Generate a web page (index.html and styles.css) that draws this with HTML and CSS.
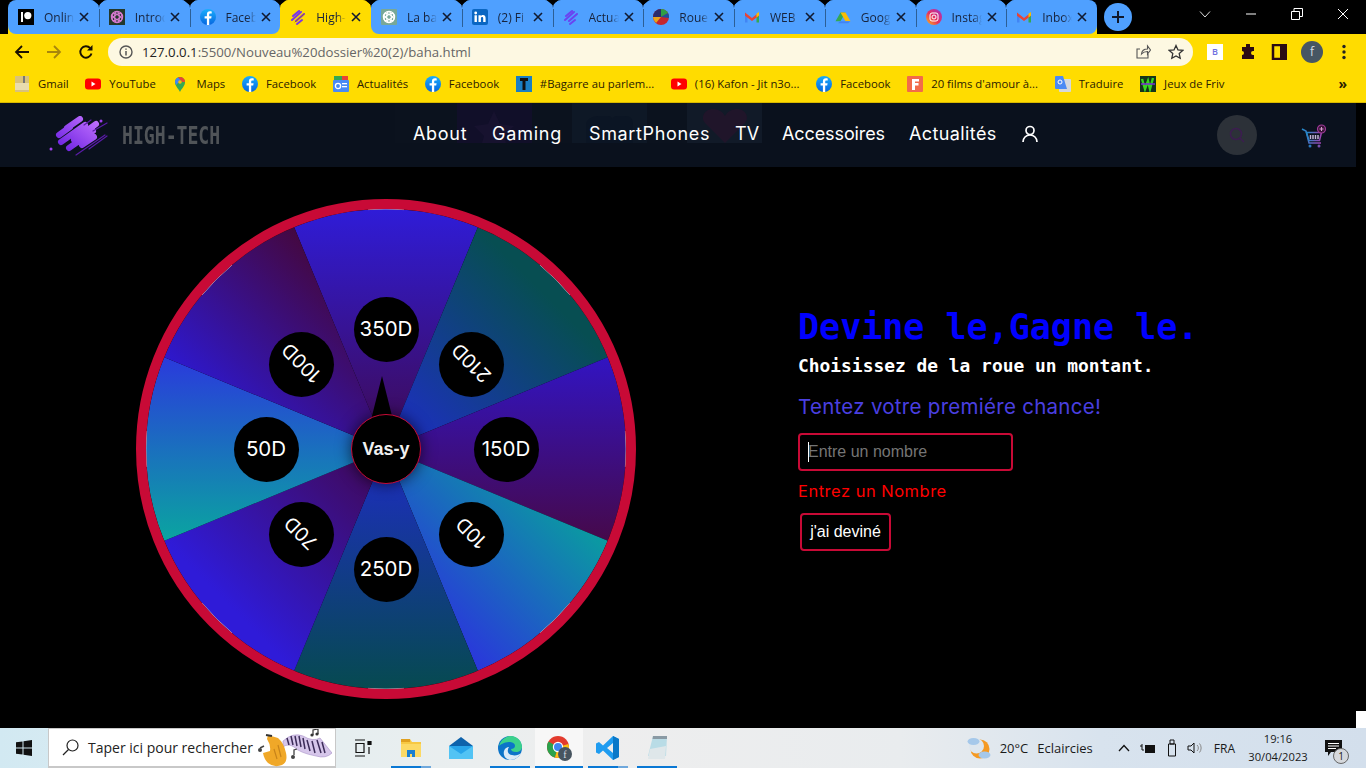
FILE: index.html
```html
<!DOCTYPE html>
<html lang="fr">
<head>
<meta charset="utf-8">
<title>High-Tech</title>
<link rel="stylesheet" href="styles.css">
</head>
<body>
<svg class="defs" width="0" height="0" aria-hidden="true">
  <defs>
    <linearGradient id="i-g" x1="0" y1="1" x2="1" y2="0"><stop offset="0" stop-color="#fdc11c"/><stop offset=".45" stop-color="#e8315b"/><stop offset="1" stop-color="#a12fc9"/></linearGradient>
    <linearGradient id="fb-g" x1="0" y1="0" x2="0" y2="1"><stop offset="0" stop-color="#1aaefc"/><stop offset="1" stop-color="#0666e0"/></linearGradient>
    <symbol id="fb" viewBox="0 0 16 16"><circle cx="8" cy="8" r="8" fill="url(#fb-g)"/><path d="M9.2 16V9.6h2l.4-2.4H9.2V5.8c0-.8.3-1.2 1.2-1.2h1.3V2.5c-.5-.1-1.1-.2-1.8-.2-1.9 0-3 1.1-3 3.1v1.8H4.6v2.4h2.3V16z" fill="#fff"/></symbol>
    <symbol id="patreon" viewBox="0 0 16 16"><rect width="16" height="16" fill="#000"/><rect x="3" y="3" width="2" height="10" fill="#fff"/><circle cx="9.8" cy="6.6" r="3.6" fill="#fff"/></symbol>
    <symbol id="ai-dark" viewBox="0 0 16 16"><rect width="16" height="16" fill="#23382b"/><g fill="none" stroke="#d77ad0" stroke-width="1.2"><circle cx="8" cy="8" r="5.6"/><ellipse cx="8" cy="8" rx="5.4" ry="2.3" transform="rotate(30 8 8)"/><ellipse cx="8" cy="8" rx="5.4" ry="2.3" transform="rotate(90 8 8)"/><ellipse cx="8" cy="8" rx="5.4" ry="2.3" transform="rotate(150 8 8)"/></g></symbol>
    <symbol id="ai-teal" viewBox="0 0 16 16"><rect width="16" height="16" rx="1" fill="#78a898"/><g fill="none" stroke="#fff" stroke-width="1.2"><circle cx="8" cy="8" r="5.6"/><ellipse cx="8" cy="8" rx="5.4" ry="2.3" transform="rotate(30 8 8)"/><ellipse cx="8" cy="8" rx="5.4" ry="2.3" transform="rotate(90 8 8)"/><ellipse cx="8" cy="8" rx="5.4" ry="2.3" transform="rotate(150 8 8)"/></g></symbol>
    <symbol id="ht" viewBox="0 0 16 16"><g stroke-linecap="round" fill="none"><path d="M3 7 9 2M2 11l9-8M6 12l8-7M7 15l5-4" stroke="#7a35e8" stroke-width="2"/><path d="M5 13l9-8" stroke="#b05a2a" stroke-width="1"/></g></symbol>
    <symbol id="ht-soft" viewBox="0 0 16 16"><g stroke-linecap="round" fill="none" stroke="#6a44f0" stroke-width="2"><path d="M3 7 9 2M2 11l9-8M6 12l8-7M7 15l5-4"/></g></symbol>
    <symbol id="in" viewBox="0 0 16 16"><rect width="16" height="16" rx="2" fill="#0a66c2"/><path d="M2.5 6.2h2.4V13H2.500zM3.700 2.600a1.400 1.400 0 1 1 0 2.800 1.400 1.400 0 0 1 0-2.800zM6.500 6.200h2.300v1c.4-.7 1.200-1.200 2.200-1.200 2 0 2.600 1.300 2.600 3.200V13h-2.400V9.600c0-.9-.2-1.600-1.100-1.600s-1.200.7-1.200 1.600V13H6.500z" fill="#fff"/></symbol>
    <symbol id="pie" viewBox="0 0 16 16"><circle cx="8" cy="8" r="8" fill="#c4262e"/><path d="M8 8V0a8 8 0 0 1 7 4z" fill="#2f9e44"/><path d="M8 8 15 4a8 8 0 0 1 1 5z" fill="#1c4f9c"/><path d="M8 8 0 8a8 8 0 0 1 8-8z" fill="#2b2b6b"/><path d="M8 8 0 8a8 8 0 0 0 3 6z" fill="#e8a31a"/></symbol>
    <symbol id="gm" viewBox="0 0 16 16"><path d="M1 3.500v10h2.500V7z" fill="#4285f4"/><path d="M15 3.500v10h-2.500V7z" fill="#34a853"/><path d="M1 3.500 8 9l7-5.500v3.200L8 12 1 6.700z" fill="#ea4335"/><path d="M12.500 4.800 15 3v3.500l-2.500 2z" fill="#fbbc04"/></symbol>
    <symbol id="drive" viewBox="0 0 16 16"><path d="M5.500 1.500h5l-5 8.800H.5z" fill="#34a853" transform="translate(0 2)"/><path d="M5.500 1.500h5l5 8.800h-5z" fill="#fbbc04" transform="translate(0 2)"/><path d="M3 14.300h10l2.500-2H5z" fill="#4285f4"/></symbol>
    <symbol id="ig" viewBox="0 0 16 16"><circle cx="8" cy="8" r="8" fill="url(#i-g)"/><rect x="4" y="4" width="8" height="8" rx="2" fill="none" stroke="#fff"/><circle cx="8" cy="8" r="2" fill="none" stroke="#fff"/></symbol>
    <symbol id="x" viewBox="0 0 10 10"><path d="M1 1l8 8M9 1 1 9" stroke="#111a30" stroke-width="1.600" fill="none"/></symbol>
    <symbol id="yt" viewBox="0 0 16 16"><rect y="2.500" width="16" height="11" rx="3" fill="#f00"/><path d="M6.500 5.500v5l4-2.500z" fill="#fff"/></symbol>
    <symbol id="zip" viewBox="0 0 16 16"><rect x="1" y="0" width="14" height="16" fill="#d9c27a"/><rect x="1" y="7" width="14" height="7" fill="#e9dcae"/><rect x="9" y="0" width="2" height="7" fill="#777"/></symbol>
    <symbol id="maps" viewBox="0 0 16 16"><path d="M8 16C6 12 3 10 3 6a5 5 0 0 1 10 0c0 4-3 6-5 10z" fill="#34a853"/><path d="M3 6a5 5 0 0 1 3-4.600L10 3 4 9z" fill="#4285f4"/><path d="M6 1.400A5 5 0 0 1 13 6H10.500z" fill="#ea4335"/><circle cx="8" cy="6" r="1.800" fill="#fbbc04"/></symbol>
    <symbol id="gnews" viewBox="0 0 16 16"><rect x="1" y="0" width="14" height="6" fill="#ea4335"/><rect x="1" y="0" width="8" height="4" fill="#34a853"/><rect y="4" width="16" height="12" rx="1" fill="#4a8af4"/><rect x="9" y="7" width="5" height="1.300" fill="#fff"/><rect x="9" y="10" width="5" height="1.300" fill="#fff"/><circle cx="5" cy="10" r="2.600" fill="none" stroke="#fff" stroke-width="1.300"/></symbol>
    <symbol id="tbox" viewBox="0 0 16 16"><rect width="16" height="16" fill="#1a7fc4"/><path d="M4 2h8v3H9.500v9h-3V5H4z" fill="#111"/></symbol>
    <symbol id="fbox" viewBox="0 0 16 16"><rect width="16" height="16" rx="1" fill="#f26b4a"/><path d="M5 3h7v2.500H8V7h3.500v2.500H8V14H5z" fill="#fff"/></symbol>
    <symbol id="tr" viewBox="0 0 16 16"><rect x="4" y="3" width="12" height="13" rx="1" fill="#d5d8dc"/><path d="M0 1a1 1 0 0 1 1-1h7l4 13H1a1 1 0 0 1-1-1z" fill="#4a8af4"/><circle cx="5" cy="6" r="2" fill="none" stroke="#fff"/></symbol>
    <symbol id="friv" viewBox="0 0 16 16"><rect width="16" height="16" fill="#15351a"/><path d="M2 3l3 10 3-8 2 8 3-11" fill="none" stroke="#38d81e" stroke-width="2.400"/><path d="M1 8h14" stroke="#7a2cd8" stroke-width="1.500"/></symbol>
  </defs>
</svg>

<header class="chrome">
  <div class="tabstrip">
    <div class="tabs">
      <div class="tab"><svg class="fav"><use href="#patreon"/></svg><span class="tab-title">Online</span><svg class="tab-x"><use href="#x"/></svg></div>
      <div class="tab"><svg class="fav"><use href="#ai-dark"/></svg><span class="tab-title">Introd</span><svg class="tab-x"><use href="#x"/></svg></div>
      <div class="tab before-active"><svg class="fav"><use href="#fb"/></svg><span class="tab-title">Faceb</span><svg class="tab-x"><use href="#x"/></svg></div>
      <div class="tab active"><svg class="fav"><use href="#ht"/></svg><span class="tab-title">High-T</span><svg class="tab-x"><use href="#x"/></svg></div>
      <div class="tab after-active"><svg class="fav"><use href="#ai-teal"/></svg><span class="tab-title">La ba</span><svg class="tab-x"><use href="#x"/></svg></div>
      <div class="tab"><svg class="fav"><use href="#in"/></svg><span class="tab-title">(2) Fi</span><svg class="tab-x"><use href="#x"/></svg></div>
      <div class="tab"><svg class="fav"><use href="#ht-soft"/></svg><span class="tab-title">Actua</span><svg class="tab-x"><use href="#x"/></svg></div>
      <div class="tab"><svg class="fav"><use href="#pie"/></svg><span class="tab-title">Roue</span><svg class="tab-x"><use href="#x"/></svg></div>
      <div class="tab"><svg class="fav"><use href="#gm"/></svg><span class="tab-title">WEB</span><svg class="tab-x"><use href="#x"/></svg></div>
      <div class="tab"><svg class="fav"><use href="#drive"/></svg><span class="tab-title">Goog</span><svg class="tab-x"><use href="#x"/></svg></div>
      <div class="tab"><svg class="fav"><use href="#ig"/></svg><span class="tab-title">Instag</span><svg class="tab-x"><use href="#x"/></svg></div>
      <div class="tab last"><svg class="fav"><use href="#gm"/></svg><span class="tab-title">Inbox</span><svg class="tab-x"><use href="#x"/></svg></div>
    </div>
    <button class="new-tab" aria-label="Nouvel onglet"><svg width="14" height="14" viewBox="0 0 14 14"><path d="M7 1v12M1 7h12" stroke="#10182c" stroke-width="2"/></svg></button>
    <div class="win-ctrls">
      <svg class="win-ic" viewBox="0 0 12 12"><path d="M1 3.500 6 9l5-5.500" fill="none" stroke="#ddd"/></svg>
      <svg class="win-ic" viewBox="0 0 12 12"><path d="M1 6h10" stroke="#fff"/></svg>
      <svg class="win-ic" viewBox="0 0 12 12"><path d="M.5 3.500h8v8h-8zM3 3.500V.5h8.500v8H8.500" fill="none" stroke="#fff"/></svg>
      <svg class="win-ic" viewBox="0 0 12 12"><path d="M1 1l10 10M11 1 1 11" stroke="#fff"/></svg>
    </div>
  </div>
  <div class="toolbar">
    <svg class="tb-ic" viewBox="0 0 16 16"><path d="M15 8H2M8 2 2 8l6 6" fill="none" stroke="#1a1000" stroke-width="1.800"/></svg>
    <svg class="tb-ic" viewBox="0 0 16 16"><path d="M1 8h13M8 2l6 6-6 6" fill="none" stroke="#a8860c" stroke-width="1.800"/></svg>
    <svg class="tb-ic" viewBox="0 0 16 16"><path d="M13.500 9.500a5.700 5.700 0 1 1-1.300-5.400" fill="none" stroke="#1a1000" stroke-width="1.900"/><path d="M14.500 1v5.500H9z" fill="#1a1000"/></svg>
    <div class="omnibox">
      <svg class="info" viewBox="0 0 14 14"><circle cx="7" cy="7" r="6" fill="none" stroke="#555" stroke-width="1.400"/><path d="M7 6v4.500M7 3.400v1.400" stroke="#555" stroke-width="1.500"/></svg>
      <span class="url"><b>127.0.0.1</b>:5500/Nouveau%20dossier%20(2)/baha.html</span>
      <svg class="omni-ic" viewBox="0 0 16 16"><path d="M13 10v4H2V5h3M6.500 10c.3-3 2.500-5 6-5V2l3 4-3 4V7.500c-2.500 0-4.500.8-6 2.500z" fill="none" stroke="#555" stroke-width="1.100"/></svg>
      <svg class="omni-ic star" viewBox="0 0 16 16"><path d="M8 1.500l2 4.400 4.800.5-3.600 3.200 1 4.700L8 11.900l-4.200 2.400 1-4.700L1.200 6.400 6 5.900z" fill="none" stroke="#333" stroke-width="1.300"/></svg>
    </div>
    <span class="ext-b">B</span>
    <svg class="tb-ic ext" viewBox="0 0 16 16"><path d="M6 1a2 2 0 0 1 4 0v2h4v4h-1a2 2 0 0 0 0 4h1v4H2v-4a2 2 0 0 0 0-4V3h4z" fill="#2a0a14"/></svg>
    <svg class="tb-ic ext" viewBox="0 0 16 16"><path d="M2 1h13v14H2z" fill="none" stroke="#2a0a14" stroke-width="2.500"/><rect x="9" y="2" width="5" height="12" fill="#2a0a14"/></svg>
    <span class="avatar">f</span>
    <svg class="tb-ic menu" viewBox="0 0 16 16"><circle cx="8" cy="2.500" r="1.700" fill="#222"/><circle cx="8" cy="8" r="1.700" fill="#222"/><circle cx="8" cy="13.500" r="1.700" fill="#222"/></svg>
  </div>
  <nav class="bookmarks">
    <span class="bm"><svg class="fav"><use href="#zip"/></svg>Gmail</span>
    <span class="bm"><svg class="fav"><use href="#yt"/></svg>YouTube</span>
    <span class="bm"><svg class="fav"><use href="#maps"/></svg>Maps</span>
    <span class="bm"><svg class="fav"><use href="#fb"/></svg>Facebook</span>
    <span class="bm"><svg class="fav"><use href="#gnews"/></svg>Actualités</span>
    <span class="bm"><svg class="fav"><use href="#fb"/></svg>Facebook</span>
    <span class="bm"><svg class="fav"><use href="#tbox"/></svg>#Bagarre au parlem...</span>
    <span class="bm"><svg class="fav"><use href="#yt"/></svg>(16) Kafon - Jit n3o...</span>
    <span class="bm"><svg class="fav"><use href="#fb"/></svg>Facebook</span>
    <span class="bm"><svg class="fav"><use href="#fbox"/></svg>20 films d'amour à...</span>
    <span class="bm"><svg class="fav"><use href="#tr"/></svg>Traduire</span>
    <span class="bm"><svg class="fav"><use href="#friv"/></svg>Jeux de Friv</span>
    <span class="bm-more">»</span>
  </nav>
</header>

<div class="page">
  <div class="site-nav">
    <div class="ghosts" aria-hidden="true">
      <span class="ghost ghost-a"><svg width="75" height="40" viewBox="0 0 75 40"><path d="M37 8l6 13 14 2-10 10 2 7H25l2-7-10-10 14-2z" fill="#17122f"/></svg></span>
      <span class="ghost ghost-b"><svg width="75" height="40" viewBox="0 0 75 40"><path d="M14 40V22c0-7 8-9 14-9h8c2 0 4 1 4 3 1-2 3-3 5-3h8c6 0 8 3 8 9v18z" fill="#0b1524"/></svg></span>
      <span class="ghost ghost-c"><svg width="75" height="40" viewBox="0 0 75 40"><path d="M38 40 18 20c-5-6 0-14 8-14 5 0 9 2 12 7 3-5 7-7 12-7 8 0 13 8 8 14z" fill="#20152a"/></svg></span>
    </div>
    <div class="brand">
      <svg class="brand-logo" width="60" height="40" viewBox="0 0 60 40">
        <defs><linearGradient id="lg" x1="0" y1="1" x2="1" y2="0"><stop offset="0" stop-color="#6c22e0"/><stop offset="1" stop-color="#c070ff"/></linearGradient></defs>
        <g fill="none" stroke-linecap="round">
          <path d="M10 19 21 11M18 12 31 3M12 26 36 9M25 24 47 8M20 32 44 15M33 29 45 21" stroke="url(#lg)" stroke-width="6"/>
          <path d="M35 9 42 4M44 15 58 7M27 39 56 19M40 33 58 20" stroke="#5a1ca8" stroke-width="1.200"/>
          <path d="M2 33h.01M52 5h.01" stroke="#a040f0" stroke-width="3"/>
        </g>
      </svg>
      <span class="brand-name">HIGH-TECH</span>
    </div>
    <ul class="menu-list">
      <li class="m-about">About</li><li class="m-gaming">Gaming</li><li class="m-phones">SmartPhones</li><li class="m-tv">TV</li><li class="m-acc">Accessoires</li><li class="m-news">Actualités</li>
      <li class="user"><svg width="18" height="18" viewBox="0 0 18 18"><circle cx="9" cy="5.500" r="4" fill="none" stroke="#fff" stroke-width="1.700"/><path d="M2 17c0-4 3-7 7-7s7 3 7 7" fill="none" stroke="#fff" stroke-width="1.700"/></svg></li>
    </ul>
    <span class="search-btn"><svg width="16" height="16" viewBox="0 0 16 16"><circle cx="7" cy="7" r="5.500" fill="none" stroke="#3c1d50" stroke-width="1.500"/><path d="M11 11l4 4" stroke="#3c1d50" stroke-width="1.500"/></svg></span>
    <svg class="cart" width="26" height="24" viewBox="0 0 26 24">
      <defs><linearGradient id="cg" x1="0" y1="0" x2="1" y2="0"><stop offset="0" stop-color="#1f8ac8"/><stop offset="1" stop-color="#a040b0"/></linearGradient></defs>
      <path d="M1 5l4 2 3 12h12" fill="none" stroke="url(#cg)" stroke-width="1.500"/>
      <path d="M5.500 8.500h15l-2 8H8z" fill="none" stroke="url(#cg)" stroke-width="1.500"/>
      <path d="M9.500 11v4M12 11v4M14.500 11v4M17 11v4" stroke="#c4b6d8" stroke-width="1.500"/>
      <circle cx="9" cy="22" r="1.500" fill="#2a78c0"/><circle cx="18" cy="22" r="1.500" fill="#7a50b0"/>
      <circle cx="20.500" cy="5" r="4" fill="#3a1438" stroke="#a03a98" stroke-width="1.200"/><path d="M20.500 3v4M18.500 5h4" stroke="#d8a0d0"/>
    </svg>
  </div>

  <main class="game">
    <div class="wheel">
      <svg class="wheel-art" width="500" height="500" viewBox="0 0 500 500">
        <defs>
          <linearGradient id="s-top" gradientUnits="userSpaceOnUse" x1="250" y1="10" x2="250" y2="250"><stop offset="0" stop-color="#2f1cd8"/><stop offset="1" stop-color="#3f0a50"/></linearGradient>
          <linearGradient id="s-right" gradientUnits="userSpaceOnUse" x1="250" y1="158" x2="250" y2="342"><stop offset="0" stop-color="#3214c2"/><stop offset="1" stop-color="#46094a"/></linearGradient>
          <linearGradient id="s-bottom" gradientUnits="userSpaceOnUse" x1="250" y1="250" x2="250" y2="490"><stop offset="0" stop-color="#1e2cc4"/><stop offset="1" stop-color="#064a50"/></linearGradient>
          <linearGradient id="s-left" gradientUnits="userSpaceOnUse" x1="250" y1="158" x2="250" y2="342"><stop offset="0" stop-color="#2a3adc"/><stop offset="1" stop-color="#0aa5a0"/></linearGradient>
          <linearGradient id="s-tr" gradientUnits="userSpaceOnUse" x1="250" y1="250" x2="407" y2="93"><stop offset="0" stop-color="#1f2ccc"/><stop offset="1" stop-color="#074e52"/></linearGradient>
          <linearGradient id="s-tl" gradientUnits="userSpaceOnUse" x1="61" y1="189" x2="188" y2="62"><stop offset="0" stop-color="#2e18cc"/><stop offset="1" stop-color="#440842"/></linearGradient>
          <linearGradient id="s-bl" gradientUnits="userSpaceOnUse" x1="93" y1="407" x2="250" y2="250"><stop offset="0" stop-color="#2f1bd8"/><stop offset="1" stop-color="#42084f"/></linearGradient>
          <linearGradient id="s-br" gradientUnits="userSpaceOnUse" x1="185" y1="315" x2="315" y2="185"><stop offset="0" stop-color="#2a36dc"/><stop offset="1" stop-color="#0a9ca0"/></linearGradient>
        </defs>
        <path fill="url(#s-top)" d="M250 250L158.160 28.300A240 240 0 0 1 341.840 28.300Z"/>
        <path fill="url(#s-tr)" d="M250 250L341.840 28.300A240 240 0 0 1 471.700 158.160Z"/>
        <path fill="url(#s-right)" d="M250 250L471.700 158.160A240 240 0 0 1 471.700 341.840Z"/>
        <path fill="url(#s-br)" d="M250 250L471.700 341.840A240 240 0 0 1 341.840 471.700Z"/>
        <path fill="url(#s-bottom)" d="M250 250L341.840 471.700A240 240 0 0 1 158.160 471.700Z"/>
        <path fill="url(#s-bl)" d="M250 250L158.160 471.700A240 240 0 0 1 28.300 341.840Z"/>
        <path fill="url(#s-left)" d="M250 250L28.300 341.840A240 240 0 0 1 28.300 158.160Z"/>
        <path fill="url(#s-tl)" d="M250 250L28.300 158.160A240 240 0 0 1 158.160 28.300Z"/>
        <g fill="none" stroke="#c8c8d4" stroke-width=".8">
          <path d="M232 10.600A240 240 0 0 1 268 10.600M232 489.400A240 240 0 0 0 268 489.400M10.600 232A240 240 0 0 0 10.600 268M489.400 232A240 240 0 0 1 489.400 268"/>
          <path d="M66 96A240 240 0 0 1 96 66M404 66A240 240 0 0 1 434 96M66 404A240 240 0 0 0 96 434M404 434A240 240 0 0 0 434 404"/>
        </g>
        <circle cx="250" cy="250" r="245" fill="none" stroke="#c80a36" stroke-width="10"/>
      </svg>
      <span class="chip chip-n">350D</span>
      <span class="chip chip-ne"><span class="flip">210D</span></span>
      <span class="chip chip-e">150D</span>
      <span class="chip chip-se"><span class="flip">10D</span></span>
      <span class="chip chip-s">250D</span>
      <span class="chip chip-sw"><span class="flip">70D</span></span>
      <span class="chip chip-w">50D</span>
      <span class="chip chip-nw"><span class="flip">100D</span></span>
      <span class="pointer"></span>
      <button class="spin">Vas-y</button>
    </div>
    <section class="panel">
      <h1 class="title">Devine le,Gagne le.</h1>
      <p class="subtitle">Choisissez de la roue un montant.</p>
      <h2 class="chance">Tentez votre premiére chance!</h2>
      <div class="field"><input class="guess" type="text" placeholder="Entre un nombre"></div>
      <p class="error">Entrez un Nombre</p>
      <button class="submit">j'ai deviné</button>
    </section>
  </main>
  <span class="corner"></span>
</div>

<footer class="taskbar">
  <span class="start"><svg width="16" height="16" viewBox="0 0 16 16"><path d="M0 2.300 6.500 1.400V7.500H0zM7.500 1.200 16 0v7.500H7.500zM0 8.500h6.500v6.100L0 13.700zM7.500 8.500H16V16l-8.500-1.200z" fill="#111"/></svg></span>
  <div class="search">
    <svg width="17" height="17" viewBox="0 0 17 17"><circle cx="10.500" cy="6.500" r="5.500" fill="none" stroke="#222" stroke-width="1.200"/><path d="M6.500 10.500 1 16" stroke="#222" stroke-width="1.200"/></svg>
    <span class="search-text">Taper ici pour rechercher</span>
    <svg class="doodle" width="74" height="38" viewBox="0 0 74 38">
      <path d="M25 12Q35 3 45 7 55 13 62 9L74 24Q68 30 58 27 42 24 36 18 30 14 25 18Z" fill="#d6c6ea" stroke="#a890c8" stroke-width=".6"/>
      <path d="M29 9l2 7M33 7l2 9M37 7l2 10M41 7l2 11M45 9l2 11M49 11l3 11M54 12l3 12M59 11l4 13M64 13l3 11" stroke="#3c2c58" stroke-width="1.500"/>
      <path d="M10 6 20 9Q26 14 28 24 30 33 24 36 16 39 10 34 6 30 5 24L12 22Q13 16 9 10Z" fill="#f0a828"/>
      <path d="M20 16 23 28M16 20l3 10" stroke="#c8841a" stroke-width="1.200"/>
      <path d="M8 6l6 1" stroke="#333" stroke-width="2"/>
      <path d="M6 17l-4 2" stroke="#444" stroke-width="1.500"/><circle cx="2" cy="21" r="2" fill="#444"/>
      <path d="M36 26v-5l3-1" stroke="#444" stroke-width="1.300" fill="none"/><circle cx="35" cy="28" r="2" fill="#444"/>
      <path d="M55 6V1l5-1v5" stroke="#333" stroke-width="1.200" fill="none"/><circle cx="54" cy="6" r="1.600" fill="#333"/><circle cx="59" cy="5" r="1.600" fill="#333"/>
    </svg>
  </div>
  <span class="tk task-view"><svg width="20" height="18" viewBox="0 0 20 18"><path d="M3 1h10M3 17h10M4 4.500h8v9H4z" fill="none" stroke="#111" stroke-width="1.200"/><path d="M16 2.500h3v3h-3zM17 8v7" stroke="#111" stroke-width="1.200" fill="#111"/></svg></span>
  <span class="tk t-explorer on"><svg width="22" height="22" viewBox="0 0 22 22"><path d="M1 2h9l2 3h9v15H1z" fill="#f7c843"/><rect x="1" y="2" width="9" height="3" fill="#e0a020"/><path d="M1 7h20v13H1z" fill="#fcd964"/><path d="M7 20v-7h8v7h-3v-3H10v3z" fill="#1a7fd0"/></svg></span>
  <span class="tk t-mail"><svg width="24" height="22" viewBox="0 0 24 22"><path d="M0 9 12 0l12 9v13H0z" fill="#0d62ab"/><path d="M0 9h24v13H0z" fill="#27a4ea"/><path d="M0 9l12 8 12-8v13H0z" fill="#52c3f4"/></svg></span>
  <span class="tk t-edge"><svg width="24" height="24" viewBox="0 0 24 24"><circle cx="12" cy="12" r="12" fill="#0c74c8"/><path d="M1 10C3 3 9 0 13 0c6 0 11 5 11 11 0 3-3 5-6 5-3 0-5-1-5-3 2 0 4-1 4-3 0-3-3-4-6-4-5 0-9 3-10 4z" fill="#3bd18c"/><path d="M12 24c-5-1-7-5-6-9 1-3 3-4 5-4-2 3-2 7 3 8 3 1 7 0 9-2-2 4-6 7-11 7z" fill="#fff" fill-opacity=".85"/></svg></span>
  <span class="tk t-chrome"><svg width="25" height="25" viewBox="0 0 25 25"><circle cx="11" cy="11" r="11" fill="#e33b2e"/><path d="M11 11 1.500 5.500A11 11 0 0 0 8 21.600z" fill="#2ba24c"/><path d="M11 11 21.500 8a11 11 0 0 1-13.500 13.600z" fill="#fbc116"/><circle cx="11" cy="11" r="5.200" fill="#fff"/><circle cx="11" cy="11" r="4" fill="#3f86f0"/><circle cx="18" cy="18" r="7" fill="#47545f"/><text x="18" y="21.500" class="avatar-f">f</text></svg></span>
  <span class="tk t-vscode on"><svg width="24" height="24" viewBox="0 0 24 24"><path d="M17 0l6 3v18l-6 3L7 14.500 3 18l-3-1.500V7.500L3 6l4 3.500zM17 7l-6 5 6 5z" fill="#1f9cf0"/><path d="M17 0l6 3v18l-6 3z" fill="#0a78c8"/></svg></span>
  <span class="tk t-note"><svg width="22" height="26" viewBox="0 0 22 26"><path d="M7 1h14l-1 20H2z" fill="#b9dce6"/><path d="M7 1h14v3H6.500z" fill="#8a9aa4"/><path d="M4 14l16-3-1 13H2z" fill="#dfe7ea"/></svg></span>
  <span class="tray-space"></span>
  <span class="weather"><svg width="24" height="24" viewBox="0 0 24 24"><circle cx="13" cy="13" r="9.500" fill="#f59a23"/><circle cx="9.500" cy="10" r="7.500" fill="#dde6ee"/><ellipse cx="6.500" cy="5.500" rx="6" ry="3.500" fill="#a5c8ea"/><ellipse cx="17.500" cy="19" rx="6" ry="3.500" fill="#a5c8ea"/></svg><span class="temp">20°C</span><span class="sky">Eclaircies</span></span>
  <svg class="tray tray-up" width="12" height="8" viewBox="0 0 12 8"><path d="M1 7l5-5.500L11 7" fill="none" stroke="#111" stroke-width="1.300"/></svg>
  <svg class="tray tray-bat" width="16" height="11" viewBox="0 0 16 11"><path d="M5 2h10v8H5z" fill="#111"/><path d="M0 3h2v4h2M2 1v2" fill="none" stroke="#111"/></svg>
  <svg class="tray tray-usb" width="12" height="18" viewBox="0 0 12 18"><path d="M1.500 5h7v12h-7zM3 1h4v4H3z" fill="none" stroke="#111"/></svg>
  <svg class="tray tray-vol" width="16" height="14" viewBox="0 0 16 14"><path d="M1 5h3l3-3v10L4 9H1z" fill="none" stroke="#111"/><path d="M10 4a4 4 0 0 1 0 6M12.500 2.500a7 7 0 0 1 0 9" fill="none" stroke="#888"/></svg>
  <span class="lang">FRA</span>
  <span class="clock"><span>19:16</span><span>30/04/2023</span></span>
  <span class="notif"><svg width="17" height="17" viewBox="0 0 17 17"><path d="M0 0h17v12H6l-3 4v-4H0z" fill="#111"/><path d="M3 3.500h11M3 6h11M3 8.500h8" stroke="#fff"/></svg><span class="notif-count">1</span></span>
</footer>
</body>
</html>
```

FILE: styles.css
```css
* { box-sizing: border-box; }
html, body { margin: 0; height: 100%; }
body {
  width: 1366px;
  height: 768px;
  overflow: hidden;
  background: #000;
  display: flex;
  flex-direction: column;
  font-family: "Open Sans", "Noto Sans", sans-serif;
}
.defs { position: absolute; }

/* browser chrome */
.chrome { background: #ffdc00; flex: none; }
.tabstrip {
  height: 34px;
  display: flex;
  align-items: center;
  padding-left: 8px;
  background: #000;
}
.tabs { display: flex; height: 34px; background: linear-gradient(#000 20px, #ffdc00 20px); }
.tab {
  position: relative;
  width: 90.75px;
  height: 34px;
  display: flex;
  align-items: center;
  padding-left: 10px;
  background: #4fa0ff;
  border-radius: 8px 8px 0 0;
}
.tab:first-child { border-bottom-left-radius: 8px; }
.tab::before {
  content: "";
  position: absolute;
  right: -1px;
  top: 9px;
  height: 18px;
  width: 1px;
  background: #2c5f96;
  z-index: 1;
}
.tab::after {
  content: "";
  position: absolute;
  right: -6px;
  top: 0;
  width: 12px;
  height: 5px;
  background: #000;
  clip-path: polygon(0 0, 100% 0, 50% 100%);
  z-index: 2;
}
.tab.last::before, .tab.last::after, .tab.active::before, .tab.before-active::before { display: none; }
.tab.active { background: #ffdc00; }
.tab.before-active { border-bottom-right-radius: 8px; }
.tab.after-active { border-bottom-left-radius: 8px; }
.tab.last { border-bottom-right-radius: 8px; }
.fav { width: 16px; height: 16px; flex: none; }
.tab-title {
  width: 30px;
  margin-left: 10px;
  overflow: hidden;
  white-space: nowrap;
  font-size: 12px;
  color: #17233c;
  -webkit-mask-image: linear-gradient(90deg, #000 70%, transparent);
  mask-image: linear-gradient(90deg, #000 70%, transparent);
}
.tab-x { width: 10px; height: 10px; margin-left: 5px; flex: none; }
.new-tab {
  width: 28px;
  height: 28px;
  margin-left: 7px;
  padding: 0;
  border: 0;
  border-radius: 50%;
  background: #4fa0ff;
  display: flex;
  align-items: center;
  justify-content: center;
}
.win-ctrls { margin-left: auto; display: flex; margin-top: -6px; }
.win-ic { width: 12px; height: 12px; margin: 0 17px; }
.toolbar {
  height: 36px;
  display: flex;
  align-items: center;
  padding: 0 0 0 14px;
}
.tb-ic { width: 16px; height: 16px; flex: none; margin-right: 16px; }
.omnibox {
  width: 1085px;
  height: 28px;
  margin-left: -2px;
  flex: none;
  border-radius: 14px;
  background: #fdf8e2;
  display: flex;
  align-items: center;
  padding-left: 11px;
}
.info { width: 14px; height: 14px; flex: none; }
.url { flex: 1; margin-left: 9px; font-size: 13.2px; color: #666; white-space: nowrap; }
.url b { font-weight: 400; color: #222; }
.omni-ic { width: 16px; height: 16px; flex: none; margin-right: 17px; }
.omni-ic.star { margin-right: 9px; }
.ext-b {
  width: 16px;
  height: 16px;
  margin: 0 17px 0 14px;
  flex: none;
  background: #fff;
  color: #6f6fe0;
  font-size: 9px;
  font-weight: 600;
  line-height: 16px;
  text-align: center;
}
.tb-ic.ext { margin-right: 15px; }
.avatar {
  width: 22px;
  height: 22px;
  margin-left: -1px;
  flex: none;
  border-radius: 50%;
  background: #475663;
  color: #d8dde2;
  font-size: 12px;
  line-height: 22px;
  text-align: center;
}
.tb-ic.menu { margin: 0 0 0 13px; }
.bookmarks {
  height: 33px;
  padding: 0 0 5px 14px;
  display: flex;
  align-items: center;
  border-bottom: 1px solid #d9b800;
  font-size: 11.3px;
  color: #2a2000;
  white-space: nowrap;
}
.bm { display: inline-flex; align-items: center; margin-right: 16.7px; }
.bm .fav { margin-right: 8px; }
.bm-more { margin-left: auto; margin-right: 19px; font-weight: 700; font-size: 14px; }

/* page */
.page { position: relative; flex: none; height: 625px; background: #000; }
.site-nav {
  position: relative;
  width: 1356px;
  height: 64px;
  background: #0a111d;
  display: flex;
  align-items: center;
}
.ghosts {
  position: absolute;
  left: 395px;
  top: 0;
  width: 367px;
  height: 40px;
  background: rgba(255, 255, 255, .008);
}
.ghost { position: absolute; top: 0; height: 40px; width: 75px; overflow: hidden; }
.ghost svg { display: block; }
.ghost-a { left: 62px; background: #110f29; }
.ghost-b { left: 177px; background: #0e1826; }
.ghost-c { left: 292px; background: #111a28; }
.brand { position: relative; display: flex; align-items: center; margin-left: 49px; margin-top: 2px; width: 172px; flex: none; }
.brand-logo { flex: none; }
.brand-name {
  margin-left: 13px;
  font-family: "DejaVu Sans Mono", monospace;
  font-size: 24px;
  font-weight: 700;
  white-space: nowrap;
  color: #505458;
  transform: scaleX(.755);
  transform-origin: left;
}
.menu-list {
  position: relative;
  display: flex;
  align-items: center;
  gap: 25px;
  list-style: none;
  margin: -3px 0 0 192px;
  padding: 0;
  font-family: Inter, "Open Sans", sans-serif;
  font-size: 18px;
  color: #fff;
  white-space: nowrap;
}
.m-about { width: 54px; letter-spacing: .7px; }
.m-gaming { width: 72px; letter-spacing: .8px; }
.m-phones { width: 121px; letter-spacing: .65px; }
.m-tv { width: 22px; letter-spacing: .1px; }
.m-acc { width: 102px; letter-spacing: -.1px; }
.m-news { width: 87px; letter-spacing: .4px; }
.user { display: flex; }
.search-btn {
  position: absolute;
  left: 1217px;
  top: 12px;
  width: 40px;
  height: 40px;
  border-radius: 50%;
  background: #2c3138;
  display: flex;
  align-items: center;
  justify-content: center;
}
.cart { position: absolute; left: 1301px; top: 21px; }

.game { display: flex; padding: 32px 0 0 136px; }
.wheel { position: relative; width: 500px; height: 500px; flex: none; }
.wheel-art { display: block; }
.chip {
  position: absolute;
  width: 65px;
  height: 65px;
  padding-bottom: 2px;
  border-radius: 50%;
  background: #000;
  color: #fff;
  font-family: Inter, "Open Sans", sans-serif;
  font-size: 20.5px;
  display: flex;
  align-items: center;
  justify-content: center;
}
.flip { display: block; font-size: 19.5px; transform: rotate(225deg); }
.chip-n { left: 217.500px; top: 97.500px; }
.chip-s { left: 217.500px; top: 337.500px; }
.chip-e { left: 337.500px; top: 217.500px; }
.chip-w { left: 97.500px; top: 217.500px; }
.chip-ne { left: 302.500px; top: 132.500px; }
.chip-nw { left: 132.500px; top: 132.500px; }
.chip-se { left: 302.500px; top: 302.500px; }
.chip-sw { left: 132.500px; top: 302.500px; }
.pointer {
  position: absolute;
  left: 235px;
  top: 177px;
  width: 22px;
  height: 44px;
  background: #000;
  clip-path: polygon(50% 0, 100% 100%, 0 100%);
}
.spin {
  position: absolute;
  left: 215px;
  top: 215px;
  width: 70px;
  height: 70px;
  padding: 0;
  border: 1.500px solid #c80a36;
  border-radius: 50%;
  background: #000;
  color: #f0f0f0;
  font-family: "Liberation Sans", Arial, sans-serif;
  font-size: 18px;
  font-weight: 700;
  box-shadow: 0 0 15px rgba(0, 0, 0, .65);
}
.panel { margin: 108px 0 0 162px; }
.title {
  margin: 0;
  font-family: "DejaVu Sans Mono", monospace;
  font-size: 35px;
  line-height: 40px;
  font-weight: 700;
  color: #0000ff;
  white-space: nowrap;
}
.subtitle {
  margin: 0;
  padding-top: 8px;
  font-family: "DejaVu Sans Mono", monospace;
  font-size: 17.900px;
  line-height: 22px;
  font-weight: 700;
  color: #fff;
  white-space: nowrap;
}
.chance {
  margin: 17px 0 0;
  font-family: Inter, "Open Sans", sans-serif;
  font-size: 20.500px;
  line-height: 26px;
  font-weight: 400;
  letter-spacing: .28px;
  color: #4a3fe0;
  white-space: nowrap;
}
.field { position: relative; margin-top: 13px; width: 215px; }
.field::after {
  content: "";
  position: absolute;
  left: 10px;
  top: 9px;
  width: 1px;
  height: 20px;
  background: #fff;
}
.guess {
  display: block;
  width: 215px;
  height: 38px;
  padding: 0 0 0 8px;
  border: 2px solid #c80a36;
  border-radius: 4px;
  outline: 0;
  background: #000;
  color: #fff;
  font-family: "Liberation Sans", Arial, sans-serif;
  font-size: 16px;
}
.guess::placeholder { color: #757575; opacity: 1; }
.error {
  margin: 9px 0 0;
  font-family: Inter, "Open Sans", sans-serif;
  font-size: 16.500px;
  line-height: 22px;
  letter-spacing: .5px;
  color: #f00;
}
.submit {
  display: block;
  margin: 11px 0 0 2px;
  width: 91px;
  height: 38px;
  padding: 0;
  border: 2px solid #c80a36;
  border-radius: 4px;
  background: #000;
  color: #fff;
  font-family: "Liberation Sans", Arial, sans-serif;
  font-size: 16px;
}
.corner { position: absolute; right: 0; bottom: 0; width: 10px; height: 17px; background: #fff; }

/* taskbar */
.taskbar {
  flex: none;
  height: 40px;
  display: flex;
  align-items: center;
  background: linear-gradient(90deg, #d2e9f2 0, #e6eef0 340px, #eeeeee 600px, #e9ecee 900px, #d8e3ee 1100px, #d3dfec 100%);
  color: #1a1a1a;
  font-size: 12.500px;
}
.start { width: 48px; display: flex; justify-content: center; }
.search {
  position: relative;
  width: 288px;
  height: 40px;
  display: flex;
  align-items: center;
  padding-left: 13px;
  background: #fff;
  border: 1px solid #c8c8c8;
  border-bottom-width: 2px;
}
.search-text { margin-left: 9px; font-size: 14px; color: #222; white-space: nowrap; }
.doodle { position: absolute; left: 209px; top: 0; }
.tk { position: relative; height: 40px; display: flex; align-items: center; justify-content: center; flex: none; }
.tk.on::after, .t-edge::after, .t-chrome::after, .t-note::after {
  content: "";
  position: absolute;
  left: 0;
  right: 0;
  bottom: 0;
  height: 2px;
  background: #0a78d4;
}
.tk.on::after { background: linear-gradient(90deg, #0a78d4 76%, #6fa8dc 76%); }
.task-view { width: 50px; margin-left: 1px; }
.t-explorer { width: 40px; margin-left: 4px; }
.t-mail { width: 59px; }
.t-edge { width: 40px; }
.t-chrome { width: 48px; margin-left: 5px; background: #f7f7f7; }
.t-vscode { width: 40px; margin-left: 5px; }
.t-note { width: 40px; margin-left: 9px; }
.tray-space { flex: 1; }
.weather { display: flex; align-items: center; }
.temp { margin-left: 9px; font-size: 13px; }
.sky { margin-left: 9px; font-size: 13px; }
.tray { flex: none; }
.tray-up { margin-left: 25px; }
.tray-bat { margin-left: 10px; }
.tray-usb { margin-left: 11px; }
.tray-vol { margin-left: 8px; }
.lang { margin-left: 11px; font-size: 12px; }
.clock {
  width: 66px;
  margin-left: 10px;
  display: flex;
  flex-direction: column;
  align-items: center;
  font-size: 11.2px;
  line-height: 18px;
}
.notif { position: relative; display: flex; width: 34px; margin: 0 7px 0 14px; }
.notif-count {
  position: absolute;
  left: 8px;
  top: 8px;
  width: 16px;
  height: 16px;
  border-radius: 50%;
  border: 1px solid #666;
  background: #d5d8dc;
  font-size: 10px;
  line-height: 14px;
  text-align: center;
}
.avatar-f { fill: #d8dde2; font-size: 10px; text-anchor: middle; font-family: "Liberation Serif", serif; }
```
